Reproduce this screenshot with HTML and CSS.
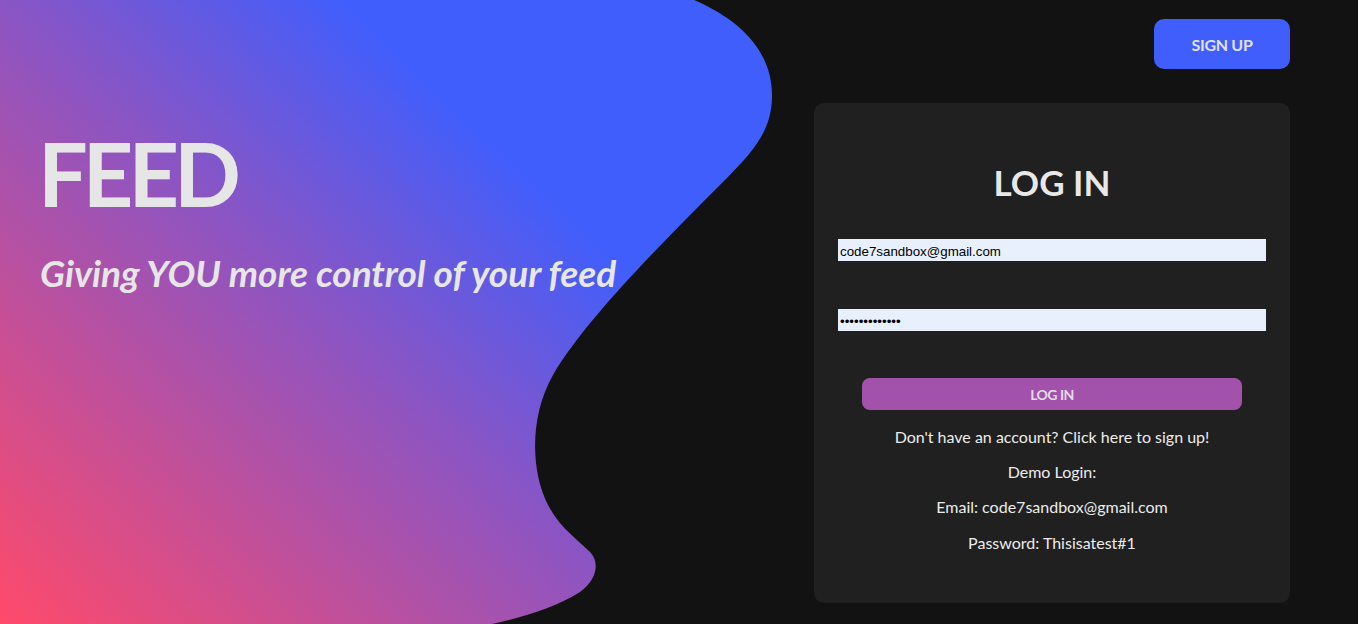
FILE: index.html
```html
<!DOCTYPE html>
<html lang="en">
<head>
<meta charset="utf-8">
<title>Feed - Log In</title>
<link rel="stylesheet" href="styles.css">
</head>
<body>
<svg class="blob" viewBox="0 0 800 624" width="800" height="624" aria-hidden="true">
  <defs>
    <linearGradient id="blobGrad" gradientUnits="userSpaceOnUse" x1="0" y1="624" x2="624" y2="-34">
      <stop offset="0" stop-color="#ff4a6a"/>
      <stop offset="0.5" stop-color="#8a55c4"/>
      <stop offset="0.76" stop-color="#405efc"/>
      <stop offset="1" stop-color="#405efc"/>
    </linearGradient>
  </defs>
  <path fill="url(#blobGrad)" d="M0 0 H694 C745 22 773 55 772 98 C771 130 755 150 725 180 C660 245 585 320 553 375 C530 415 530 470 548 505 C560 528 578 540 590 552 C600 562 597 580 580 592 C555 608 520 618 492 624 H0 Z"/>
</svg>
<div class="page">
  <section class="hero">
    <h1 class="hero-title">FEED</h1>
    <p class="hero-tagline">Giving YOU more control of your feed</p>
  </section>
  <section class="side">
    <button class="signup-btn" type="button">SIGN UP</button>
    <div class="card">
      <h2 class="card-title">LOG IN</h2>
      <form class="login-form">
        <input class="field" type="email" value="code7sandbox@gmail.com">
        <input class="field field-pass" type="password" value="Thisisatest#1">
        <button class="login-btn" type="button">LOG IN</button>
      </form>
      <p class="note note-first">Don't have an account? Click here to sign up!</p>
      <p class="note">Demo Login:</p>
      <p class="note">Email: code7sandbox@gmail.com</p>
      <p class="note">Password: Thisisatest#1</p>
    </div>
  </section>
</div>
</body>
</html>
```
FILE: styles.css
```css
html, body {
  margin: 0;
  padding: 0;
}
body {
  background: #121212;
  width: 1358px;
  height: 624px;
  overflow: hidden;
  position: relative;
  font-family: Lato, "Open Sans", sans-serif;
  color: #e6e6e6;
}
.blob {
  position: absolute;
  top: 0;
  left: 0;
  z-index: 0;
  display: block;
}
.page {
  position: relative;
  z-index: 1;
  display: flex;
  justify-content: space-between;
  height: 624px;
}
.hero {
  padding: 121px 0 0 40px;
}
.hero-title {
  margin: 0 0 0 -2px;
  font-size: 88px;
  font-weight: 700;
  line-height: 1.2;
  letter-spacing: -5px;
  color: #e6e6e6;
}
.hero-tagline {
  margin: 24px 0 0;
  font-size: 37px;
  font-style: italic;
  font-weight: 700;
  letter-spacing: -0.05px;
  line-height: 1.2;
  color: #e6e6e6;
}
.side {
  width: 476px;
  margin-right: 68px;
  padding-top: 19px;
  display: flex;
  flex-direction: column;
  align-items: flex-end;
}
.signup-btn {
  width: 136px;
  height: 50px;
  border: none;
  border-radius: 10px;
  background: #405efc;
  color: #e0e0f2;
  font-family: Lato, sans-serif;
  font-weight: 700;
  font-size: 16px;
  letter-spacing: -0.3px;
  padding: 0;
}
.card {
  margin-top: 34px;
  width: 476px;
  height: 500px;
  box-sizing: border-box;
  background: #202020;
  border-radius: 10px;
  padding: 58px 24px 0;
  display: flex;
  flex-direction: column;
  align-items: center;
}
.card-title {
  margin: 0;
  font-size: 35px;
  font-weight: 700;
  line-height: 1.2;
  color: #e8e8e8;
}
.login-form {
  width: 100%;
  display: flex;
  flex-direction: column;
  align-items: center;
  margin-top: 36px;
}
.field {
  width: 100%;
  height: 22px;
  box-sizing: border-box;
  border: none;
  background: #e8f0fe;
  padding: 3px 2px 0;
  font-family: "Liberation Sans", Arial, sans-serif;
  font-size: 13.33px;
  color: #000;
  outline: none;
}
.field-pass {
  margin-top: 48px;
}
.login-btn {
  margin-top: 47px;
  width: 380px;
  height: 32px;
  border: none;
  border-radius: 8px;
  background: #a352ac;
  color: #e4dcea;
  font-family: Lato, sans-serif;
  font-weight: 700;
  font-size: 14px;
  letter-spacing: -0.5px;
  padding: 0;
}
.note {
  margin: 16px 0 0;
  font-size: 16px;
  line-height: 1.2;
  color: #ececec;
  text-align: center;
}
.note-first {
  margin-top: 17px;
}
```
